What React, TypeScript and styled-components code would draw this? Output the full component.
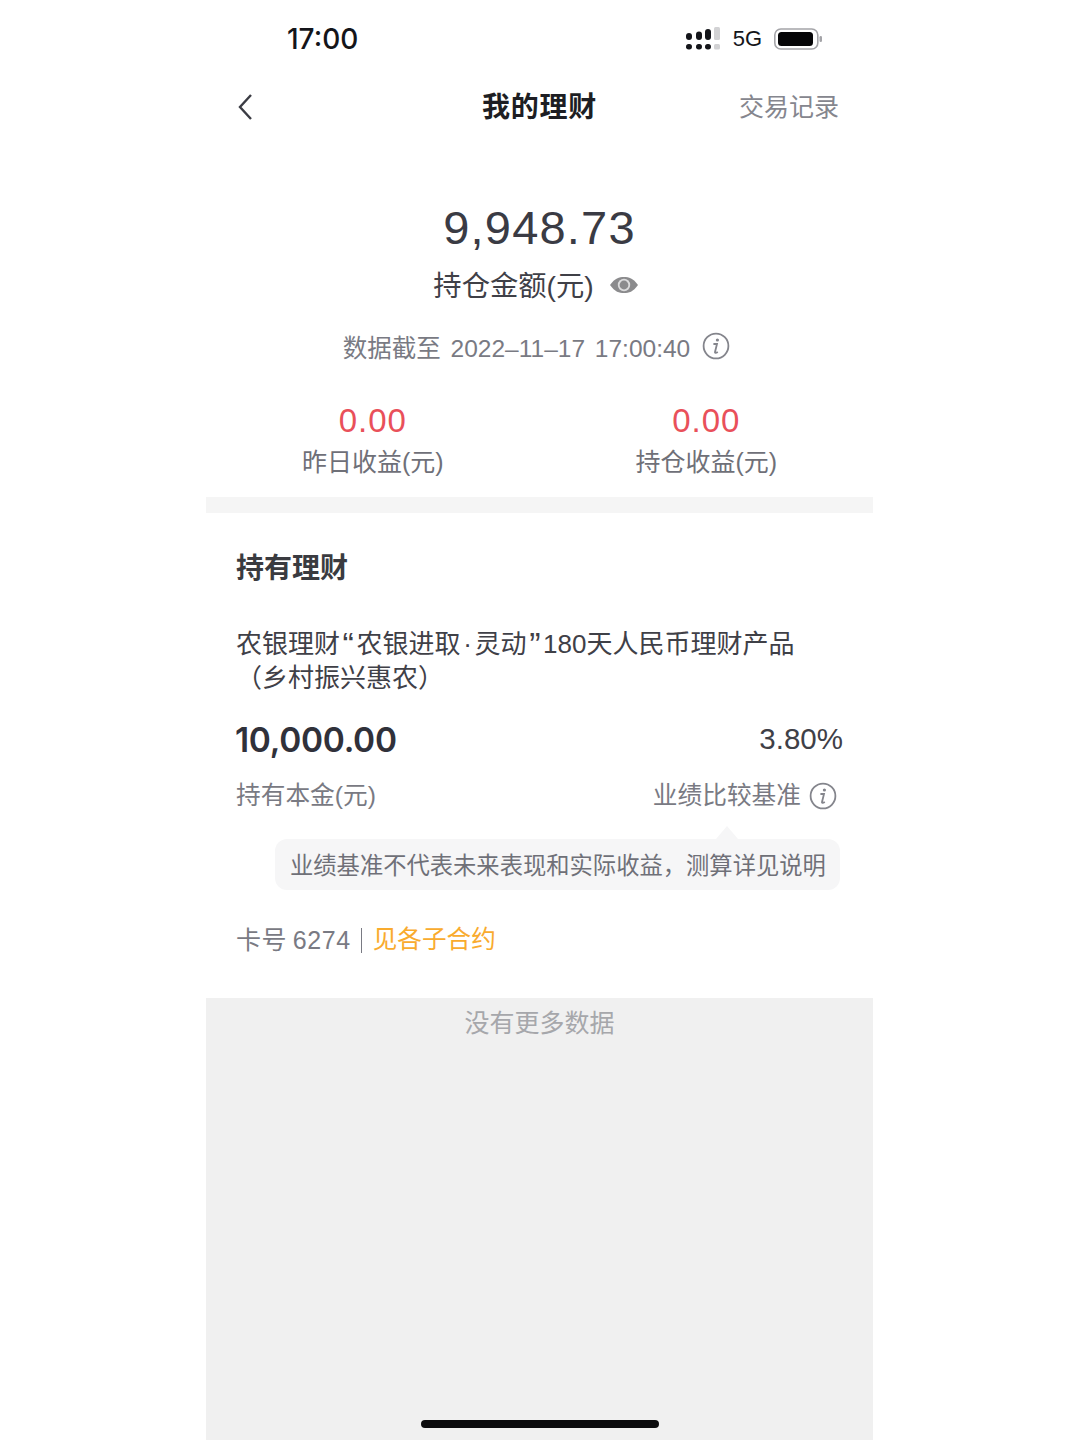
import React from 'react';
import styled, { createGlobalStyle } from 'styled-components';

const GlobalStyle = createGlobalStyle`
  html, body {
    margin: 0;
    padding: 0;
    background: #ffffff;
  }

  body {
    font-family: "Liberation Sans", "Noto Sans CJK SC", sans-serif;
    color: #33343a;
  }
`;

const Page = styled.div`
  width: 1080px;
  height: 1440px;
  box-sizing: border-box;
  padding-left: 206px;
  overflow: hidden;
`;

const Phone = styled.div`
  position: relative;
  width: 667px;
  height: 1440px;
  display: flex;
  flex-direction: column;
`;

const StatusBar = styled.div`
  height: 78px;
  box-sizing: border-box;
  padding: 0 51px 0 81px;
  display: flex;
  align-items: center;
  justify-content: space-between;
`;

const Clock = styled.span`
  font-family: Inter, "Liberation Sans", sans-serif;
  font-size: 28px;
  font-weight: 500;
  color: #14151a;
`;

const StatusIcons = styled.div`
  display: flex;
  align-items: center;
  gap: 12px;
`;

const Network = styled.span`
  font-size: 22px;
  color: #14151a;
`;

const NavBar = styled.div`
  height: 58px;
  box-sizing: border-box;
  padding: 0 34px 0 31px;
  display: grid;
  grid-template-columns: 1fr auto 1fr;
  align-items: center;
`;

const NavTitle = styled.span`
  margin-left: 3px;
  padding-bottom: 4px;
  font-size: 28px;
  font-weight: 700;
  letter-spacing: 0.7px;
  color: #1d1e23;
`;

const NavLink = styled.span`
  justify-self: end;
  padding-bottom: 4px;
  font-size: 25px;
  color: #85868e;
`;

const Summary = styled.div`
  display: flex;
  flex-direction: column;
  align-items: center;
  padding-top: 59px;
`;

const Total = styled.div`
  font-size: 47px;
  line-height: 66px;
  letter-spacing: 1.2px;
  color: #3a3b44;
`;

const TotalLabel = styled.div`
  display: flex;
  align-items: center;
  gap: 15px;
  height: 44px;
  padding-right: 7px;
  font-size: 28.3px;
  color: #3f4047;

  svg {
    margin-top: 4px;
  }
`;

const Stamp = styled.div`
  display: flex;
  align-items: center;
  gap: 12px;
  margin-top: 23px;
  height: 36px;
  padding-right: 6px;
  font-size: 24.5px;
  word-spacing: 3px;
  color: #797a83;
`;

const Earnings = styled.div`
  align-self: stretch;
  display: grid;
  grid-template-columns: 1fr 1fr;
  margin-top: 35px;
`;

const Earning = styled.div`
  display: flex;
  flex-direction: column;
  align-items: center;
`;

const EarningValue = styled.div`
  font-size: 33px;
  line-height: 44px;
  letter-spacing: 1px;
  color: #e9505a;
`;

const EarningLabel = styled.div`
  font-size: 25px;
  line-height: 38px;
  color: #6f7078;
`;

const Band = styled.div`
  height: 16px;
  background: #f5f5f5;
  margin-top: 16px;
`;

const Holding = styled.div`
  height: 485px;
  box-sizing: border-box;
  padding: 37px 30px 0;
  display: flex;
  flex-direction: column;
`;

const SectionTitle = styled.div`
  font-size: 28px;
  line-height: 38px;
  font-weight: 700;
  color: #3a3b40;
`;

const ProductName = styled.div`
  margin-top: 39px;
  font-size: 26px;
  line-height: 34px;
  color: #3f4047;
`;

const Mark = styled.span<{ $width: number }>`
  display: inline-block;
  width: ${props => props.$width}px;
  text-align: center;
`;

const QuoteMark = styled(Mark)`
  font-size: 34px;
  line-height: 0;
  vertical-align: -3px;
`;

const Figures = styled.div`
  display: flex;
  justify-content: space-between;
  align-items: center;
  margin-top: 22px;
`;

const Principal = styled.div`
  font-family: Inter, "Liberation Sans", sans-serif;
  font-size: 33.5px;
  line-height: 46px;
  font-weight: 600;
  letter-spacing: -0.3px;
  margin-left: -1px;
  color: #30313a;
`;

const Rate = styled.div`
  padding-bottom: 2px;
  font-size: 29.5px;
  color: #3f4047;
`;

const Captions = styled.div`
  display: flex;
  justify-content: space-between;
  align-items: center;
  margin-top: 15px;
  padding-right: 6px;
  font-size: 24.7px;
  line-height: 36px;
  color: #797a83;
`;

const CaptionEnd = styled.div`
  display: flex;
  align-items: center;
  gap: 8px;
`;

const Tip = styled.div`
  position: relative;
  align-self: flex-end;
  width: 565px;
  height: 51px;
  margin: 25px 3px 0 0;
  box-sizing: border-box;
  padding: 0 0 2px 15px;
  display: flex;
  align-items: center;
  border-radius: 12px;
  background: #f6f6f7;
  font-size: 23.3px;
  color: #6f7078;

  &::before {
    content: "";
    position: absolute;
    top: -13px;
    right: 102px;
    border-left: 11px solid transparent;
    border-right: 11px solid transparent;
    border-bottom: 13px solid #f6f6f7;
  }
`;

const CardRow = styled.div`
  display: flex;
  align-items: center;
  margin-top: 32px;
  font-size: 25px;
  line-height: 36px;
  letter-spacing: 0.6px;
  word-spacing: -2px;
  color: #797a83;
`;

const Divider = styled.span`
  width: 1px;
  height: 25px;
  margin: 0 11px 0 10px;
  background: #797a83;
`;

const Contract = styled.span`
  letter-spacing: 0;
  font-size: 24.6px;
  color: #f9ab2e;
`;

const Footer = styled.div`
  flex: 1;
  background: #f0f0f0;
  padding-top: 7px;
  text-align: center;
  font-size: 25px;
  line-height: 36px;
  color: #a6a7ab;
`;

const HomeBar = styled.div`
  position: absolute;
  left: 215px;
  bottom: 12px;
  width: 238px;
  height: 8px;
  border-radius: 4px;
  background: #0b0b0d;
`;

const SignalIcon = () => (
  <svg width="36" height="24" viewBox="0 0 36 24">
    <g fill="#14151a">
      <rect x="1" y="6" width="6" height="7" rx="3" />
      <rect x="1" y="17" width="6" height="5.5" rx="2.7" />
      <rect x="11" y="4.5" width="6" height="8.5" rx="3" />
      <rect x="11" y="17" width="6" height="5.5" rx="2.7" />
      <rect x="20" y="2" width="6" height="11" rx="3" />
      <rect x="20" y="17" width="6" height="5.5" rx="2.7" />
    </g>
    <g fill="#d2d2d4">
      <rect x="29" y="0" width="6" height="13" rx="1.5" />
      <rect x="29" y="17" width="6" height="5.5" rx="1.5" />
    </g>
  </svg>
);

const BatteryIcon = () => (
  <svg width="48" height="24" viewBox="0 0 48 24">
    <rect x="0.8" y="2" width="43" height="20" rx="6" fill="none" stroke="#a4a4a8" strokeWidth="1.6" />
    <rect x="4" y="5" width="35" height="14" rx="3.5" fill="#050507" />
    <rect x="45.5" y="9" width="2.5" height="6" rx="1.2" fill="#a4a4a8" />
  </svg>
);

const BackIcon = () => (
  <svg width="16" height="28" viewBox="0 0 16 28">
    <path d="M14 2 L3 14 L14 26" fill="none" stroke="#3b3c44" strokeWidth="2.4" />
  </svg>
);

const EyeIcon = () => (
  <svg width="30" height="20" viewBox="0 0 30 20">
    <path d="M1 10 C6 3 10 2 15 2 C20 2 24 3 29 10 C24 17 20 18 15 18 C10 18 6 17 1 10 Z" fill="#8b8b8d" />
    <circle cx="15" cy="10" r="6.2" fill="#dcdcdd" />
    <circle cx="15" cy="10" r="4.4" fill="#8b8b8d" />
  </svg>
);

const InfoIcon = () => (
  <svg width="28" height="28" viewBox="0 0 28 28">
    <circle cx="14" cy="14" r="12.4" fill="none" stroke="#84858c" strokeWidth="1.8" />
    <circle cx="15.4" cy="8" r="1.6" fill="#84858c" />
    <path d="M11.4 12 H15 L13 20 C12.8 21 13.6 21.4 15.8 20" fill="none" stroke="#84858c" strokeWidth="1.8" />
  </svg>
);

const App = () => {
  return (
    <Page>
      <GlobalStyle />
      <Phone>
        <StatusBar>
          <Clock>17:00</Clock>
          <StatusIcons>
            <SignalIcon />
            <Network>5G</Network>
            <BatteryIcon />
          </StatusIcons>
        </StatusBar>
        <NavBar>
          <BackIcon />
          <NavTitle>我的理财</NavTitle>
          <NavLink>交易记录</NavLink>
        </NavBar>
        <Summary>
          <Total>9,948.73</Total>
          <TotalLabel>
            持仓金额(元)
            <EyeIcon />
          </TotalLabel>
          <Stamp>
            数据截至 2022–11–17 17:00:40
            <InfoIcon />
          </Stamp>
          <Earnings>
            <Earning>
              <EarningValue>0.00</EarningValue>
              <EarningLabel>昨日收益(元)</EarningLabel>
            </Earning>
            <Earning>
              <EarningValue>0.00</EarningValue>
              <EarningLabel>持仓收益(元)</EarningLabel>
            </Earning>
          </Earnings>
        </Summary>
        <Band />
        <Holding>
          <SectionTitle>持有理财</SectionTitle>
          <ProductName>
            农银理财<QuoteMark $width={16.5}>“</QuoteMark>农银进取<Mark $width={14}>·</Mark>灵动<QuoteMark $width={16.5}>”</QuoteMark>180天人民币理财产品
            <br />
            （乡村振兴惠农）
          </ProductName>
          <Figures>
            <Principal>10,000.00</Principal>
            <Rate>3.80%</Rate>
          </Figures>
          <Captions>
            <span>持有本金(元)</span>
            <CaptionEnd>
              业绩比较基准
              <InfoIcon />
            </CaptionEnd>
          </Captions>
          <Tip>业绩基准不代表未来表现和实际收益，测算详见说明</Tip>
          <CardRow>
            卡号 6274
            <Divider />
            <Contract>见各子合约</Contract>
          </CardRow>
        </Holding>
        <Footer>没有更多数据</Footer>
        <HomeBar />
      </Phone>
    </Page>
  );
};

export default App;
